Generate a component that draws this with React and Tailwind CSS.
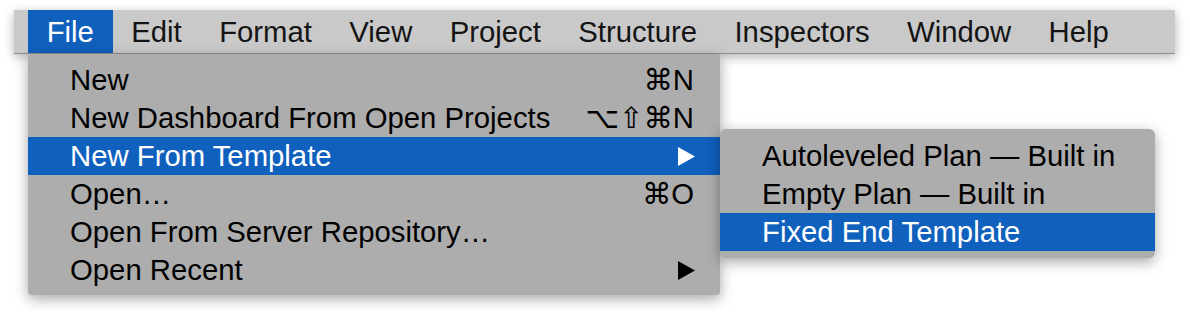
import React from 'react';

const font = { fontFamily: '"Liberation Sans", Arial, "DejaVu Sans", sans-serif' };

// 상단 메뉴바 항목
const menuBarItems = ['File', 'Edit', 'Format', 'View', 'Project', 'Structure', 'Inspectors', 'Window', 'Help'];

const fileItems = [
  { label: 'New', shortcut: '⌘N' },
  { label: 'New Dashboard From Open Projects', shortcut: '⌥⇧⌘N' },
  { label: 'New From Template', submenu: true, active: true },
  { label: 'Open…', shortcut: '⌘O' },
  { label: 'Open From Server Repository…' },
  { label: 'Open Recent', submenu: true },
];

const templateItems = [
  { label: 'Autoleveled Plan — Built in' },
  { label: 'Empty Plan — Built in' },
  { label: 'Fixed End Template', active: true },
];

const Arrow = ({ white }) => (
  <svg width="17" height="19" viewBox="0 0 17 19" className="block">
    <polygon points="0,0 17,9.5 0,19" fill={white ? '#ffffff' : '#000000'} />
  </svg>
);

// 서브메뉴
const TemplateMenu = () => (
  <div className="absolute left-[692px] top-[-8px] w-[435px] pt-[8px] pb-[7px] bg-[#adadad] rounded-[6px] shadow-[0_4px_14px_rgba(0,0,0,0.35)]">
    {templateItems.map((item) => (
      <div
        key={item.label}
        className={`h-[38px] flex items-center pl-[42px] whitespace-nowrap ${item.active ? 'bg-[#1060bd] text-white' : 'text-black'}`}
      >
        {item.label}
      </div>
    ))}
  </div>
);

// File 드롭다운
const FileMenu = () => (
  <div className="absolute left-0 top-[44px] w-[692px] pt-[7px] pb-[6px] bg-[#adadad] rounded-b-[4px] shadow-[0_4px_14px_rgba(0,0,0,0.35)]">
    {fileItems.map((item) => (
      <div
        key={item.label}
        className={`relative h-[38px] flex items-center justify-between pl-[42px] pr-[25px] whitespace-nowrap ${item.active ? 'bg-[#1060bd] text-white' : 'text-black'}`}
      >
        <span>{item.label}</span>
        {item.shortcut && <span className="pr-[1px]">{item.shortcut}</span>}
        {item.submenu && <Arrow white={item.active} />}
        {item.active && <TemplateMenu />}
      </div>
    ))}
  </div>
);

export default function App() {
  return (
    <div className="w-[1190px] h-[312px] bg-white pt-[10px] pl-[14px] text-[29.3px] leading-none" style={font}>
      <div className="relative w-[1161px] h-[44px] flex pl-[14px] bg-[#c9c9c9] border-b border-[#8f8f8f] shadow-[0_3px_10px_rgba(0,0,0,0.3)]">
        {menuBarItems.map((name) => (
          <div
            key={name}
            className={`relative h-[43px] flex items-center px-[18.7px] ${name === 'File' ? 'bg-[#1060bd] text-white' : 'text-[#141414]'}`}
          >
            {name}
            {name === 'File' && <FileMenu />}
          </div>
        ))}
      </div>
    </div>
  );
}
